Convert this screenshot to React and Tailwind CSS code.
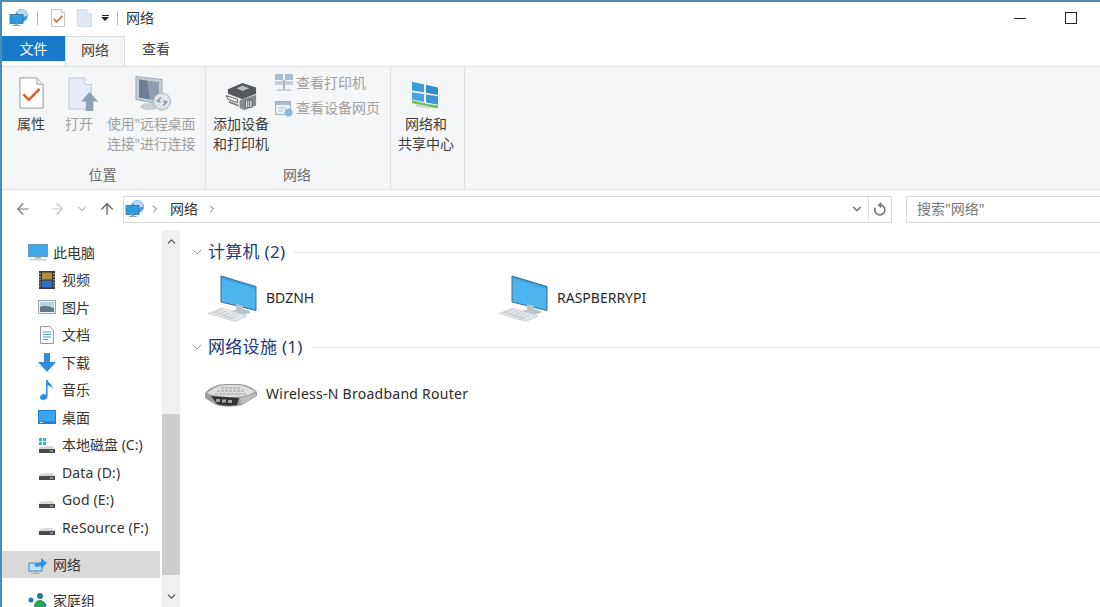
import React from "react";
import { ArrowLeft, ArrowRight, ArrowUp, ChevronDown, ChevronRight, ChevronUp } from "lucide-react";

const NetIcon = ({ className = "" }) => (
  <svg viewBox="0 0 20 20" className={`shrink-0 ${className}`}>
    <circle cx="12.5" cy="7.5" r="6.5" fill="#4f9cd8" />
    <path d="M7 4c3-2 5-3 8-2.500 2 1 3.500 3.500 3.500 6L13 9z" fill="#b4daf5" />
    <rect x="1" y="6.500" width="13" height="9" fill="#2f9be0" stroke="#3a6f96" strokeWidth=".8" />
    <path d="M6 15.500h3v1.500h2.500v1H4v-1h2z" fill="#8aa3b5" />
  </svg>
);

const CheckDoc = ({ className = "" }) => (
  <svg viewBox="0 0 28 35" preserveAspectRatio="none" className={`shrink-0 ${className}`}>
    <path d="M1 1h19l7 7v26H1z" fill="#fff" stroke="#8d8d8d" strokeWidth="1" />
    <path d="M20 1v7h7" fill="#e9e9e9" stroke="#a8a8a8" strokeWidth="1" />
    <path d="M5 19l6 6L23 13" fill="none" stroke="#d9642a" strokeWidth="3" />
  </svg>
);

const OpenDoc = () => (
  <svg viewBox="0 0 32 36" preserveAspectRatio="none" className="w-[30px] h-[34px] shrink-0 ml-[8px] mb-[3px]">
    <path d="M1 1h17l7 7v26H1z" fill="#e3ecf7" stroke="#b9c7d8" strokeWidth="1" />
    <path d="M18 1v7h7" fill="#fff" stroke="#b9c7d8" strokeWidth="1" />
    <path d="M23 16l9 10h-5v10h-8V26h-5z" fill="#8aa0b6" />
  </svg>
);

const BlankDoc = ({ className = "" }) => (
  <svg viewBox="0 0 16 19" className={`shrink-0 ${className}`}>
    <path d="M.5.500h10l5 5v13H.5z" fill="#dfe8f3" stroke="#cdd7e4" />
    <path d="M10.500.500v5h5" fill="#f2f6fa" stroke="#cdd7e4" />
  </svg>
);

const RdpIcon = () => (
  <svg viewBox="0 0 36 36" className="w-[36px] h-[37px] shrink-0 ml-[3px] mb-[2px]">
    <path d="M1 1l26 3v25L1 24z" fill="#c6ced8" stroke="#9eaab6" />
    <path d="M4 4l20 2.500v19L4 22z" fill="#8f9db0" />
    <path d="M4 4l8 1 3 19-11-2z" fill="#6d7f94" />
    <ellipse cx="14" cy="31" rx="9" ry="3.500" fill="#c8cfd6" />
    <circle cx="27" cy="26" r="8.500" fill="#dfe5ea" stroke="#a8b3bd" />
    <path d="M26 22l-3.500 3.500 3 1M28 30l3.500-3.500-3-1" fill="none" stroke="#8494a4" strokeWidth="1.500" />
  </svg>
);

const PrinterIcon = () => (
  <svg viewBox="0 0 34 32" preserveAspectRatio="none" className="w-[33px] h-[29px] shrink-0 mb-[3px]">
    <path d="M3 8l15-7 14 5v7l-14 6-15-6z" fill="#55595d" />
    <path d="M12 7l6-3 7 3-7 3z" fill="#b9c0c4" />
    <path d="M1 15l12 4v4L3 19z" fill="#f4f4f4" stroke="#55595c" />
    <path d="M4 21l10 4v2L4 23z" fill="#70767a" />
    <path d="M15 20l17-6v12l-12 5-5-2z" fill="#858b8f" />
    <rect x="21" y="20" width="7" height="8" rx="1" fill="#e7e9ea" stroke="#4a4f52" />
    <path d="M23.500 21v6M25.500 21v6" stroke="#4a4f52" />
  </svg>
);

const ViewPrinters = () => (
  <svg viewBox="0 0 18 18" className="w-[18px] h-[18px] shrink-0">
    <rect x="0" y="0" width="8" height="6" fill="#a9bdd1" />
    <rect x="10" y="0" width="8" height="6" fill="#a9bdd1" />
    <rect x="0" y="7" width="8" height="4" fill="#c3cfdb" />
    <rect x="10" y="7" width="8" height="4" fill="#c3cfdb" />
    <path d="M9 6v9" stroke="#a9b5c0" strokeWidth="2" />
    <rect x="2" y="15" width="14" height="2" fill="#c6d2dd" />
  </svg>
);

const ViewWeb = () => (
  <svg viewBox="0 0 18 17" className="w-[18px] h-[17px] shrink-0">
    <rect x=".5" y="1.500" width="15" height="13" fill="#eef2f6" stroke="#9eb1c4" />
    <rect x="1" y="2" width="14" height="3" fill="#a9bdd1" />
    <path d="M3 8h8M3 11h5" stroke="#a9bdd1" strokeWidth="1.200" />
    <circle cx="13.500" cy="12.500" r="4" fill="#8fb9de" />
  </svg>
);

const WinNet = () => (
  <svg viewBox="0 0 28 34" preserveAspectRatio="none" className="w-[28px] h-[30px] shrink-0 mb-[4px] mr-[2px]">
    <path d="M1 2l12 3v9L1 12z" fill="#3d9bdc" />
    <path d="M15 5.500l12 3v8.500l-12-2.500z" fill="#2f8dd0" />
    <path d="M1 14l12 2v9L1 22z" fill="#46a3e0" />
    <path d="M15 16.500l12 2V28l-12-2.500z" fill="#3d96d6" />
    <path d="M1 23l12 3 2 1 12 2v3L15 30 1 26z" fill="#6cc24a" />
    <path d="M5 27l14 3v3L5 30z" fill="#cfd6da" />
  </svg>
);

const Computer = () => (
  <svg viewBox="0 0 51 48" className="w-[51px] h-[48px] shrink-0">
    <path d="M14 1l35 10.500v24L14 27z" fill="#4db5ee" stroke="#3a6a8c" strokeWidth="1" />
    <path d="M14 1l35 10.500v2.500L14 3.500z" fill="#2d8dcc" opacity=".55" />
    <path d="M29 29l7 1.700v3l7 2.300v2l-6 1.500-13-3.500 5-1.500z" fill="#b9c4cb" />
    <path d="M1 38.500l14-5.500 25 8-12 5.500z" fill="#e4e7e9" stroke="#c3c7ca" strokeWidth=".6" />
    <path d="M5 38.500l10-4M9 40l10-4M13 41.500l10-4M17 43l10-4M21 44.500l10-4M6 36.500l21 7.500" stroke="#bfc4c8" strokeWidth=".7" />
  </svg>
);

const Router = () => (
  <svg viewBox="0 0 54 24" className="w-[54px] h-[24px] shrink-0">
    <path d="M1 10C6 4 14 1 22 1h10c9 0 16 3 21 8v4L38 22c-8 2-18 2-26 0L1 15z" fill="#9c9c9c" />
    <path d="M3 10C9 5 15 2 23 2h9c8 0 14 3 19 7-7 4-15 5-24 5S9 13 3 10z" fill="#dedede" />
    <path d="M17 5h20M13 8h28M11 11h32" stroke="#9a9a9a" strokeWidth="1" strokeDasharray="3 1" />
    <path d="M7 13l28 2-2 7c-7 1-14 1-20-1z" fill="#333" />
    <path d="M12 16h4v3h-4zM18 16.500h4v3h-4zM24 17h4v3h-4z" fill="#a5a5a5" />
    <path d="M36 15l16-4.500v2.500l-15 8.500z" fill="#bdbdbd" />
  </svg>
);

const Drive = ({ win }) => (
  <svg viewBox="0 0 18 18" className="w-[18px] h-[18px]">
    {win && <path d="M1 2h3v3H1zM5 2h3v3H5zM1 6h3v3H1zM5 6h3v3H5z" fill="#35b4c8" />}
    <path d="M3 10.500l11-.5 3 3H1z" fill="#d8d8d8" />
    <rect x="1" y="13" width="16" height="4" fill="#4b4b4b" />
    <rect x="12" y="14.500" width="3" height="1" fill="#d0d0d0" />
  </svg>
);

const PcNav = () => (
  <svg viewBox="0 0 20 20" className="w-[20px] h-[20px]">
    <rect x=".5" y="2.500" width="19" height="12" fill="#3fa9ec" stroke="#6b97b6" />
    <path d="M7 15h6v2H7z" fill="#b3c3cf" />
    <path d="M1 18h18" stroke="#aebcc7" />
  </svg>
);

const Video = () => (
  <svg viewBox="0 0 16 18" className="w-[16px] h-[18px]">
    <rect width="16" height="18" fill="#3a3a3a" />
    <rect x="3" y="1.500" width="10" height="7" fill="#b28c3c" />
    <rect x="3" y="9.500" width="10" height="7" fill="#2f6fc0" />
    <path d="M1 2v14M15 2v14" stroke="#d5d5d5" strokeWidth="1" strokeDasharray="1.500 1.500" />
  </svg>
);

const Picture = () => (
  <svg viewBox="0 0 18 14" className="w-[18px] h-[14px]">
    <rect x=".5" y=".5" width="17" height="13" fill="#eef1f3" stroke="#a5a5a5" />
    <rect x="2" y="2" width="14" height="5" fill="#b9d3e6" />
    <path d="M2 7c4-2 9-1 14 1v4H2z" fill="#5d7b8c" />
  </svg>
);

const DocNav = () => (
  <svg viewBox="0 0 14 18" className="w-[14px] h-[18px]">
    <path d="M.5.500h9l4 4v13H.5z" fill="#fafbfc" stroke="#9a9a9a" />
    <path d="M3 6h8M3 8.500h8M3 11h8M3 13.500h5" stroke="#5aa0c8" />
  </svg>
);

const Download = () => (
  <svg viewBox="0 0 18 19" className="w-[18px] h-[19px]">
    <path d="M6 0h6v9h6l-9 10L0 9h6z" fill="#2f8ee0" />
  </svg>
);

const Music = () => (
  <svg viewBox="0 0 14 20" className="w-[14px] h-[20px]">
    <path d="M6 0h1.600c.5 3 5 4 5 9-1-2-3-3.500-5-3.800V16c0 2.500-2 4-4.500 4C1.300 20 0 19 0 17.500 0 15.500 2 14 4 14c.8 0 1.500.2 2 .5z" fill="#2f8ee0" />
  </svg>
);

const Desktop = () => (
  <svg viewBox="0 0 18 14" className="w-[18px] h-[14px]">
    <rect width="18" height="14" fill="#1f7fd6" />
    <rect x="1" y="1" width="16" height="10.500" fill="#37a6ee" />
    <rect x="2" y="12" width="3" height="1" fill="#cfe8f8" />
  </svg>
);

const NetNav = () => (
  <svg viewBox="0 0 20 20" className="w-[20px] h-[20px]">
    <rect x="1" y="8" width="13" height="8" fill="#bfe0f7" stroke="#3a8fd0" strokeWidth="1" />
    <path d="M6 9l7-2V3l6 5-6 6v-3l-5 1z" fill="#2f96e6" />
    <path d="M6 16h4v1.500H6z" fill="#8fa6b8" />
    <path d="M3 18.500h9" stroke="#9ab2c4" />
  </svg>
);

const HomeGroup = () => (
  <svg viewBox="0 0 20 18" className="w-[20px] h-[18px]">
    <circle cx="3" cy="8" r="2.500" fill="#2c75c9" />
    <circle cx="12" cy="4" r="3" fill="#1f7f8f" />
    <path d="M6 15c0-5 3-7 6-7s6 2 6 7z" fill="#2fa44f" />
    <circle cx="17" cy="13" r="1.500" fill="#2c75c9" />
  </svg>
);

const Refresh = () => (
  <svg viewBox="0 0 14 14" className="w-[14px] h-[14px] mx-[4px]" fill="none" stroke="#777" strokeWidth="1.600">
    <path d="M6 3a5 5 0 1 1-3.600 2.600" />
    <path d="M8.200 .8 5.800 3l2.400 2.400" />
  </svg>
);

const navItems = [
  { label: "视频", icon: <Video /> },
  { label: "图片", icon: <Picture /> },
  { label: "文档", icon: <DocNav /> },
  { label: "下载", icon: <Download /> },
  { label: "音乐", icon: <Music /> },
  { label: "桌面", icon: <Desktop /> },
  { label: "本地磁盘 (C:)", icon: <Drive win /> },
  { label: "Data (D:)", icon: <Drive />, latin: true },
  { label: "God (E:)", icon: <Drive />, latin: true },
  { label: "ReSource (F:)", icon: <Drive />, latin: true },
];

const RibbonBtn = ({ icon, lines, muted, className = "" }) => (
  <div className={`flex flex-col items-center ${className}`}>
    <div className="h-[38px] w-0 flex items-end justify-center">{icon}</div>
    <div className={`text-[14px] leading-[20px] text-center whitespace-nowrap ${muted ? "text-[#a0a0a0]" : "text-[#3c3c3c]"}`}>
      {lines.map((l) => (
        <div key={l}>{l}</div>
      ))}
    </div>
  </div>
);

const Group = ({ label, className = "", children }) => (
  <div className={`flex flex-col h-full border-r border-[#e0e1e2] ${className}`}>
    <div className="flex-1 flex pt-[9px]">{children}</div>
    <div className="h-[25px] pt-[1px] pr-[2px] text-center text-[14px] leading-[20px] text-[#6a6a6a]">{label}</div>
  </div>
);

const Section = ({ title }) => (
  <div className="flex items-center h-[24px] pl-[3px]">
    <ChevronDown size={16} strokeWidth={1.2} className="text-[#7d7d7d] shrink-0" />
    <span className="ml-[3px] text-[17px] leading-[24px] tracking-[0.3px] text-[#1e3a7b] whitespace-nowrap">{title}</span>
    <div className="h-px flex-1 bg-[#e3e3e3] ml-[9px]" />
  </div>
);

const Item = ({ icon, name, className = "", textClass = "" }) => (
  <div className={`flex items-center ${className}`}>
    {icon}
    <span className={`text-[14px] leading-[20px] text-[#2a2a2a] whitespace-nowrap pb-[2px] ${textClass}`}>{name}</span>
  </div>
);

export default function App() {
  return (
    <div className="w-[1100px] h-[607px] overflow-hidden bg-white flex flex-col border-t-2 border-l-2 border-[#4a8db5] font-['Noto_Sans','Noto_Sans_CJK_SC',sans-serif]">
      <div className="h-[34px] shrink-0 flex items-center pb-[2px] text-[14px] text-[#333]">
        <NetIcon className="ml-[7px] w-[20px] h-[20px]" />
        <div className="ml-[8px] w-px h-[14px] bg-[#bdbdbd]" />
        <CheckDoc className="ml-[13px] w-[14px] h-[18px]" />
        <BlankDoc className="ml-[12px] w-[15px] h-[18px]" />
        <div className="ml-[9px] flex flex-col items-center">
          <div className="w-[7px] h-[1px] bg-[#222] mb-[1px]" />
          <div className="w-0 h-0 border-x-[4px] border-x-transparent border-t-[4px] border-t-[#222]" />
        </div>
        <div className="ml-[8px] w-px h-[14px] bg-[#bdbdbd]" />
        <span className="ml-[8px] pb-[2px]">网络</span>
        <div className="flex-1" />
        <div className="w-[12px] h-px bg-[#222]" />
        <div className="ml-[39px] mr-[23px] w-[12px] h-[12px] border border-[#222]" />
      </div>

      <div className="h-[30px] shrink-0 flex items-start text-[14px] relative z-10">
        <div className="w-[63px] h-[25px] bg-[#1979ca] text-white flex items-center justify-center">文件</div>
        <div className="w-[60px] h-[30px] bg-[#f5f6f7] border-x border-t border-[#dadbdc] text-[#444] flex items-center justify-center pb-[5px]">网络</div>
        <div className="w-[62px] h-[25px] text-[#444] flex items-center justify-center">查看</div>
      </div>

      <div className="h-[124px] shrink-0 bg-[#f5f6f7] border-t border-b border-[#e0e1e2] flex">
        <Group label="位置" className="w-[204px]">
          <RibbonBtn className="ml-[15px]" icon={<CheckDoc className="w-[25px] h-[32px] mb-[5px]" />} lines={["属性"]} />
          <RibbonBtn muted className="ml-[20px]" icon={<OpenDoc />} lines={["打开"]} />
          <RibbonBtn muted className="ml-[14px] tracking-[-0.2px]" icon={<RdpIcon />} lines={["使用\"远程桌面", "连接\"进行连接"]} />
        </Group>
        <Group label="网络" className="w-[185px]">
          <RibbonBtn className="ml-[7px]" icon={<PrinterIcon />} lines={["添加设备", "和打印机"]} />
          <div className="ml-[6px] -mt-[3px] flex flex-col gap-[5px] text-[14px] leading-[20px] text-[#a0a0a0]">
            <div className="flex items-center gap-[3px] whitespace-nowrap"><ViewPrinters />查看打印机</div>
            <div className="flex items-center gap-[3px] whitespace-nowrap"><ViewWeb />查看设备网页</div>
          </div>
        </Group>
        <Group label="" className="w-[74px]">
          <RibbonBtn className="w-full pr-[3px]" icon={<WinNet />} lines={["网络和", "共享中心"]} />
        </Group>
      </div>

      <div className="h-[38px] shrink-0 flex items-center text-[14px]">
        <ArrowLeft size={18} strokeWidth={1.6} className="ml-[12px] text-[#777]" />
        <ArrowRight size={18} strokeWidth={1.6} className="ml-[16px] text-[#c9c9c9]" />
        <ChevronDown size={12} strokeWidth={2} className="ml-[10px] text-[#888]" />
        <ArrowUp size={18} strokeWidth={1.8} className="ml-[10px] text-[#666]" />
        <div className="ml-[7px] w-[769px] h-[27px] border border-[#d9d9d9] flex items-center">
          <NetIcon className="ml-[1px] w-[20px] h-[20px]" />
          <ChevronRight size={12} strokeWidth={2} className="ml-[4px] text-[#666]" />
          <span className="ml-[9px] text-[#333] pb-[2px]">网络</span>
          <ChevronRight size={12} strokeWidth={2} className="ml-[8px] text-[#666]" />
          <div className="flex-1" />
          <ChevronDown size={14} strokeWidth={2} className="mr-[4px] text-[#666]" />
          <div className="w-px h-full bg-[#e3e3e3]" />
          <Refresh />
        </div>
        <div className="ml-[14px] flex-1 h-[27px] border border-r-0 border-[#d9d9d9] pl-[10px] pb-[1px] text-[#777] flex items-center">搜索"网络"</div>
      </div>

      <div className="flex-1 min-h-0 flex">
        <div className="w-[158px] shrink-0 pt-[10.5px] text-[14px] text-[#333]">
          <div className="h-[27.5px] flex items-center pl-[26px] gap-[5px]"><PcNav /><span>此电脑</span></div>
          {navItems.map((n) => (
            <div key={n.label} className="h-[27.5px] flex items-center pl-[35px] whitespace-nowrap">
              <div className="w-[20px] flex justify-center mr-[5px]">{n.icon}</div>
              <span className={n.latin ? "tracking-[0.15px]" : ""}>{n.label}</span>
            </div>
          ))}
          <div className="mt-[10px] h-[27px] bg-[#d9d9d9] flex items-center pl-[26px] gap-[5px]"><NetNav /><span className="pb-[1px]">网络</span></div>
          <div className="mt-[9px] h-[27px] flex items-center pl-[26px] gap-[5px]"><HomeGroup /><span>家庭组</span></div>
        </div>

        <div className="ml-[2px] w-[18px] shrink-0 bg-[#f0f0f0] flex flex-col items-center mt-[2px]">
          <div className="h-[20px] flex items-center justify-center pt-[3px]"><ChevronUp size={13} strokeWidth={2.4} className="text-[#555]" /></div>
          <div className="h-[164px]" />
          <div className="w-full h-[161px] bg-[#cdcdcd]" />
          <div className="flex-1 flex items-center justify-center pt-[10px]"><ChevronDown size={13} strokeWidth={2.4} className="text-[#555]" /></div>
        </div>

        <div className="flex-1 min-w-0 pt-[12px] pl-[6px]">
          <Section title="计算机 (2)" />
          <div className="flex mt-[10px] h-[50px]">
            <Item className="w-[312px] pl-[21px] gap-[8px]" icon={<Computer />} name="BDZNH" />
            <Item className="gap-[8px]" icon={<Computer />} name="RASPBERRYPI" />
          </div>
          <div className="mt-[11px]"><Section title="网络设施 (1)" /></div>
          <Item className="mt-[11px] h-[50px] pl-[18px] gap-[8px]" textClass="tracking-[0.26px]" icon={<Router />} name="Wireless-N Broadband Router" />
        </div>
      </div>
    </div>
  );
}
